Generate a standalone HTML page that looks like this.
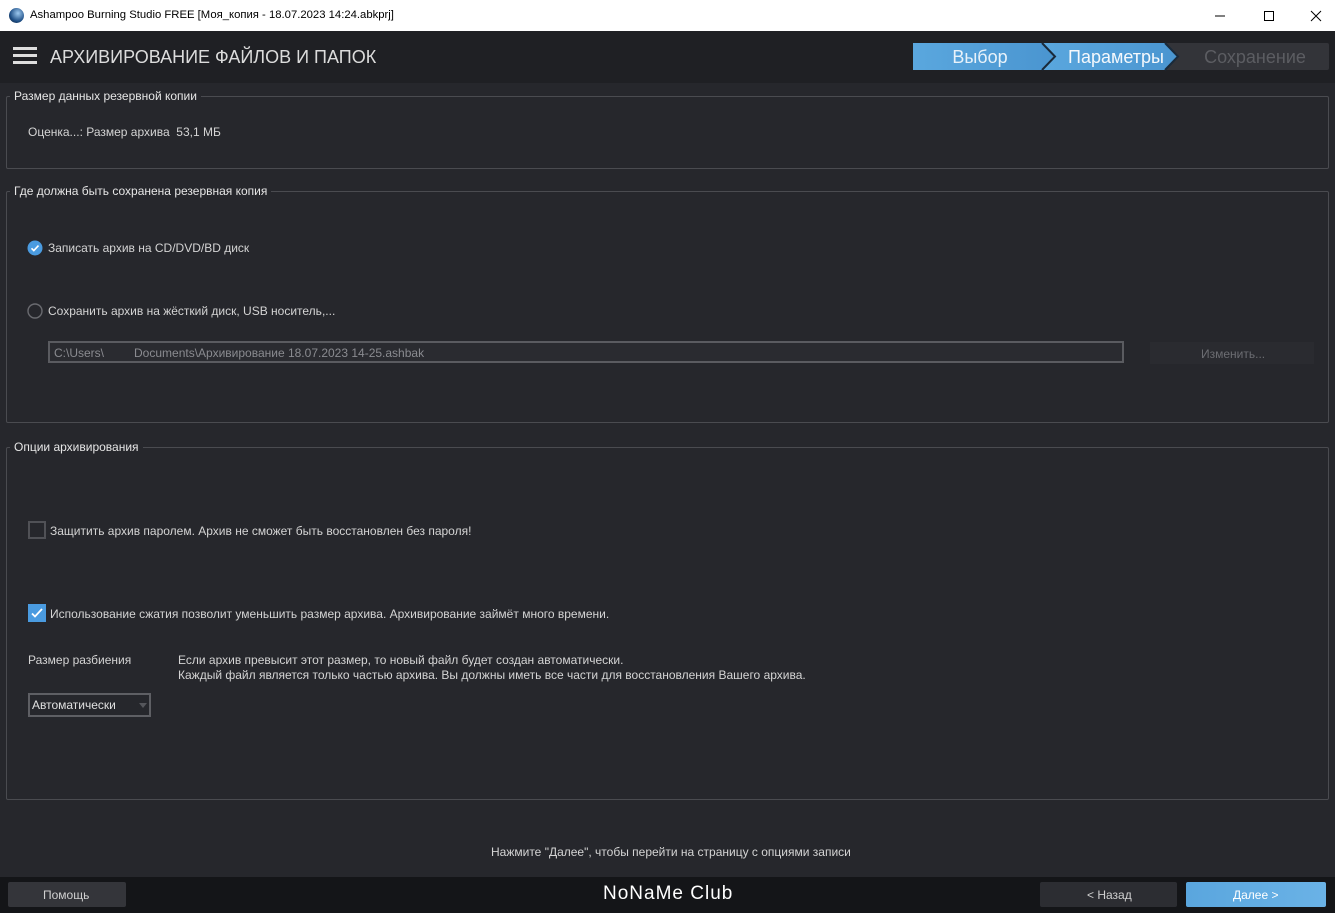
<!DOCTYPE html>
<html><head><meta charset="utf-8"><style>
*{margin:0;padding:0;box-sizing:border-box}
body{width:1335px;height:913px;overflow:hidden;background:#26272c;font-family:"Liberation Sans","DejaVu Sans",sans-serif;color:#d8d8d8;position:relative;font-size:12px}
.abs{position:absolute}
.tb{left:0;top:0;width:1335px;height:31px;background:#fff;color:#000}
.hdr{left:0;top:31px;width:1335px;height:52px;background:#1f2024}
fieldset.f{position:absolute;border:1px solid #4a4b50;border-radius:2px;left:6px;width:1323px}
.leg{position:absolute;background:#26272c;padding:0 4px;color:#e6e6e6;font-size:12px}
.t{position:absolute;white-space:nowrap;font-size:12px;color:#d4d4d4}
</style></head><body>
<div class="abs tb">
 <div class="abs" style="left:9px;top:8px;width:15px;height:15px;border-radius:50%;background:radial-gradient(circle at 60% 35%,#9cc8ef,#1f4f86 60%,#0b1a30)"></div>
 <div class="t" style="left:30px;top:9px;color:#000;font-size:11.3px">Ashampoo Burning Studio FREE [Моя_копия - 18.07.2023 14:24.abkprj]</div>
 <svg class="abs" style="left:1210px;top:8px" width="115" height="16"><path d="M5 8h10" stroke="#000"/><rect x="54.5" y="3.5" width="9" height="9" fill="none" stroke="#000"/><path d="M101 3l10 10M111 3l-10 10" stroke="#000"/></svg>
</div>
<div class="abs hdr">
 <div class="abs" style="left:13px;top:16px;width:24px;height:3px;background:#ddd;box-shadow:0 7px 0 #ddd,0 14px 0 #ddd"></div>
 <div class="t" style="left:50px;top:16px;font-size:18px;color:#dcdcdc">АРХИВИРОВАНИЕ ФАЙЛОВ И ПАПОК</div>
 <svg class="abs" style="left:912px;top:10px" width="418" height="30">
  <defs><linearGradient id="g" x1="0" x2="1"><stop offset="0" stop-color="#5aa7de"/><stop offset="1" stop-color="#4a95d0"/></linearGradient></defs>
  <rect x="1" y="2" width="416" height="27" rx="2" fill="#333439"/>
  <path d="M1 2h129l13 13.5-13 13.5H1z" fill="url(#g)"/>
  <path d="M130 2h123l13 13.5-13 13.5H130l13-13.5z" fill="url(#g)"/>
  <path d="M130 2l13 13.5-13 13.5M253 2l13 13.5-13 13.5" stroke="#1a2a3a" stroke-width="2" fill="none"/>
  <text x="68" y="22" text-anchor="middle" font-size="18" fill="#e8f2fa" font-family="Liberation Sans">Выбор</text>
  <text x="204" y="22" text-anchor="middle" font-size="18" fill="#f4f8fc" font-family="Liberation Sans">Параметры</text>
  <text x="343" y="22" text-anchor="middle" font-size="18" fill="#5c5d62" font-family="Liberation Sans">Сохранение</text>
 </svg>
</div>

<fieldset class="f" style="top:96px;height:73px"></fieldset>
<div class="leg" style="left:10px;top:89px">Размер данных резервной копии</div>
<div class="t" style="left:28px;top:125px">Оценка...: Размер архива&nbsp; 53,1 МБ</div>

<fieldset class="f" style="top:191px;height:232px"></fieldset>
<div class="leg" style="left:10px;top:184px">Где должна быть сохранена резервная копия</div>
<svg class="abs" style="left:27px;top:240px" width="16" height="16"><circle cx="8" cy="8" r="7.5" fill="#4a9be0"/><path d="M4.5 8.3l2.3 2.3 4.7-5" stroke="#fff" stroke-width="1.6" fill="none"/></svg>
<div class="t" style="left:48px;top:241px">Записать архив на CD/DVD/BD диск</div>
<svg class="abs" style="left:27px;top:303px" width="16" height="16"><circle cx="8" cy="8" r="7" fill="none" stroke="#6a6b70" stroke-width="1.4"/></svg>
<div class="t" style="left:48px;top:304px">Сохранить архив на жёсткий диск, USB носитель,...</div>
<div class="abs" style="left:48px;top:341px;width:1076px;height:22px;border:2px solid #5a5b60;background:#2a2b30"></div>
<div class="t" style="left:54px;top:346px;color:#8a8b90">C:\Users\&nbsp;&nbsp;&nbsp;&nbsp;&nbsp;&nbsp;&nbsp;&nbsp; Documents\Архивирование 18.07.2023 14-25.ashbak</div>
<div class="abs" style="left:1150px;top:342px;width:164px;height:22px;background:#2a2b30"></div>
<div class="t" style="left:1201px;top:347px;color:#6c6d72">Изменить...</div>

<fieldset class="f" style="top:447px;height:353px"></fieldset>
<div class="leg" style="left:10px;top:440px">Опции архивирования</div>
<div class="abs" style="left:28px;top:521px;width:18px;height:18px;border:2px solid #505156"></div>
<div class="t" style="left:50px;top:524px">Защитить архив паролем. Архив не сможет быть восстановлен без пароля!</div>
<svg class="abs" style="left:28px;top:604px" width="18" height="18"><rect width="18" height="18" fill="#4a9be0"/><path d="M4 9.5l3 3 7-7.5" stroke="#fff" stroke-width="1.8" fill="none"/></svg>
<div class="t" style="left:50px;top:607px">Использование сжатия позволит уменьшить размер архива. Архивирование займёт много времени.</div>
<div class="t" style="left:28px;top:653px">Размер разбиения</div>
<div class="t" style="left:178px;top:653px">Если архив превысит этот размер, то новый файл будет создан автоматически.</div>
<div class="t" style="left:178px;top:668px">Каждый файл является только частью архива. Вы должны иметь все части для восстановления Вашего архива.</div>
<div class="abs" style="left:28px;top:693px;width:123px;height:24px;border:2px solid #5e5f64;background:#26272c"></div>
<div class="t" style="left:32px;top:698px;color:#e0e0e0">Автоматически</div>
<div class="abs" style="left:139px;top:703px;border-left:4px solid transparent;border-right:4px solid transparent;border-top:5px solid #55565b"></div>

<div class="t" style="left:491px;top:845px">Нажмите "Далее", чтобы перейти на страницу с опциями записи</div>

<div class="abs" style="left:0;top:877px;width:1335px;height:36px;background:#141518"></div>
<div class="abs" style="left:8px;top:882px;width:118px;height:25px;background:#34353a;border-radius:2px"></div>
<div class="t" style="left:43px;top:888px;color:#d0d0d0">Помощь</div>
<div class="t" style="left:603px;top:883px;font-size:19px;color:#fff;letter-spacing:1px">NoNaMe Club</div>
<div class="abs" style="left:1040px;top:882px;width:137px;height:25px;background:#2c2d32;border-radius:2px"></div>
<div class="t" style="left:1087px;top:888px;color:#d0d0d0">&lt; Назад</div>
<div class="abs" style="left:1186px;top:882px;width:140px;height:25px;background:linear-gradient(90deg,#5aa6de,#6ab2e6);border-radius:2px"></div>
<div class="t" style="left:1233px;top:888px;color:#fff">Далее &gt;</div>
</body></html>
